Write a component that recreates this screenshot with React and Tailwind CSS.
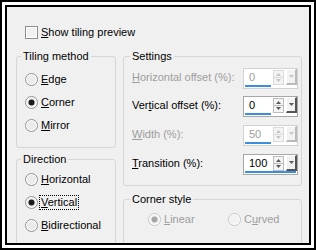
import React from "react";

const Radio = ({ checked, disabled }) => (
  <svg width="13" height="13" viewBox="0 0 13 13" className="shrink-0">
    <circle cx="6.5" cy="6.5" r="6" fill="#fff" stroke={disabled ? "#c4c4c4" : "#8e8f8f"} />
    <circle cx="6.5" cy="6.5" r="4.5" fill={disabled ? "#f2f2f2" : "#ebebeb"} />
    {checked && <circle cx="6.5" cy="6.5" r="3" fill={disabled ? "#a6a6a6" : "#1b1b1b"} />}
  </svg>
);

const Checkbox = () => (
  <svg width="13" height="13" viewBox="0 0 13 13" className="shrink-0">
    <rect x="0.5" y="0.5" width="12" height="12" fill="#fff" stroke="#8e8f8f" />
    <rect x="2" y="2" width="9" height="9" fill="#f1f1f1" />
  </svg>
);

function RadioRow({ label, ul, rest, checked, disabled, focus, h = "h-[23px]" }) {
  return (
    <div className={`flex items-center gap-[3px] ${h}`}>
      <Radio checked={checked} disabled={disabled} />
      <span
        className={`leading-[13px] ${disabled ? "text-[#9d9d9d]" : "text-black"} ${
          focus ? "outline outline-1 outline-dotted outline-black px-[1px] -ml-[1px]" : ""
        }`}
      >
        {label}
        <span className="underline underline-offset-[1px]">{ul}</span>
        {rest}
      </span>
    </div>
  );
}

function SpinBox({ value, pct, disabled }) {
  const arrow = disabled ? "#c6c6c6" : "#5a5a5a";
  return (
    <div
      className={`w-[55px] h-[21px] border flex flex-col bg-white ${
        disabled ? "border-[#d2d2d2]" : "border-[#a8a8a8]"
      }`}
    >
      <div className="flex h-[16px]">
        <div className={`flex-1 pl-[5px] leading-[16px] ${disabled ? "text-[#9d9d9d]" : "text-black"}`}>
          {value}
        </div>
        <svg width="11" height="15" viewBox="0 0 11 15" className="mt-[1px] mr-[2px]">
          <rect x="0.5" y="0.5" width="10" height="14" fill="#f4f4f4" stroke={disabled ? "#dadada" : "#bdbdbd"} />
          <line x1="1" y1="7.5" x2="10" y2="7.5" stroke={disabled ? "#dadada" : "#bdbdbd"} />
          <polygon points="3,6 5.5,3 8,6" fill={arrow} />
          <polygon points="3,9 8,9 5.5,12" fill={arrow} />
        </svg>
        <div
          className={`w-[11px] h-[16px] flex justify-center pt-[5px] bg-[#f2f2f2] border-l border-t border-l-white border-t-white border-r-2 border-b-2 ${
            disabled ? "border-r-[#b9b9b9] border-b-[#b9b9b9]" : "border-r-[#555] border-b-[#555]"
          }`}
        >
          <svg width="5" height="3" viewBox="0 0 5 3">
            <polygon points="0,0 5,0 2.5,3" fill={arrow} />
          </svg>
        </div>
      </div>
      <div className="h-[3px] px-[1px] pb-[1px]">
        <div className="h-full bg-[#3b8de0]" style={{ width: `${pct}%` }} />
      </div>
    </div>
  );
}

function SettingRow({ pre, ul, rest, value, pct, disabled, h }) {
  return (
    <div className={`flex items-start ${h}`}>
      <div className={`w-[111px] mt-[1px] leading-[16px] ${disabled ? "text-[#9d9d9d]" : "text-black"}`}>
        {pre}
        <span className="underline underline-offset-[1px]">{ul}</span>
        {rest}
      </div>
      <SpinBox value={value} pct={pct} disabled={disabled} />
    </div>
  );
}

const Group = ({ title, legendCls, className, children }) => (
  <fieldset className={`border border-[#d6d6d6] rounded-[3px] ${className}`}>
    <legend className={`px-[2px] leading-[13px] text-black ${legendCls}`}>{title}</legend>
    {children}
  </fieldset>
);

export default function App() {
  return (
    <div className="w-[316px] h-[250px] bg-white border-2 border-black p-[3px] font-['Liberation_Sans',Arial,sans-serif] text-[11px]">
      <div className="h-full border-2 border-black bg-[#f0f0f0] overflow-hidden pl-[9px] pt-[19px]">
        <div className="flex items-center gap-[3px] ml-[9px] h-[13px]">
          <Checkbox />
          <span className="leading-[13px] text-black">
            <span className="underline underline-offset-[1px]">S</span>how tiling preview
          </span>
        </div>

        <div className="flex gap-[7px] mt-[11px]">
          <div className="w-[100px] flex flex-col">
            <Group title="Tiling method" legendCls="-ml-[4px]" className="h-[98px] pl-[8px] pt-[5px]">
              <RadioRow ul="E" rest="dge" />
              <RadioRow ul="C" rest="orner" checked />
              <RadioRow ul="M" rest="irror" />
            </Group>
            <Group title="Direction" legendCls="-ml-[4px]" className="h-[120px] mt-[5px] pl-[8px] pt-[2px]">
              <RadioRow ul="H" rest="orizontal" />
              <RadioRow ul="V" rest="ertical" checked focus />
              <RadioRow ul="B" rest="idirectional" />
            </Group>
          </div>

          <div className="w-[179px] flex flex-col">
            <Group title="Settings" legendCls="-ml-[2px]" className="h-[136px] pl-[8px] pt-[5px]">
              <SettingRow ul="H" rest="orizontal offset (%):" value="0" pct={50} disabled h="h-[28px]" />
              <SettingRow pre="Ver" ul="t" rest="ical offset (%):" value="0" pct={50} h="h-[29px]" />
              <SettingRow ul="W" rest="idth (%):" value="50" pct={50} disabled h="h-[29px]" />
              <SettingRow ul="T" rest="ransition (%):" value="100" pct={100} h="h-[21px]" />
            </Group>
            <Group title="Corner style" legendCls="-ml-[18px]" className="h-[80px] mt-[7px] pl-[24px] pt-[2px]">
              <div className="flex">
                <div className="w-[80px]">
                  <RadioRow ul="L" rest="inear" checked disabled />
                </div>
                <RadioRow label="C" ul="u" rest="rved" disabled />
              </div>
            </Group>
          </div>
        </div>
      </div>
    </div>
  );
}
